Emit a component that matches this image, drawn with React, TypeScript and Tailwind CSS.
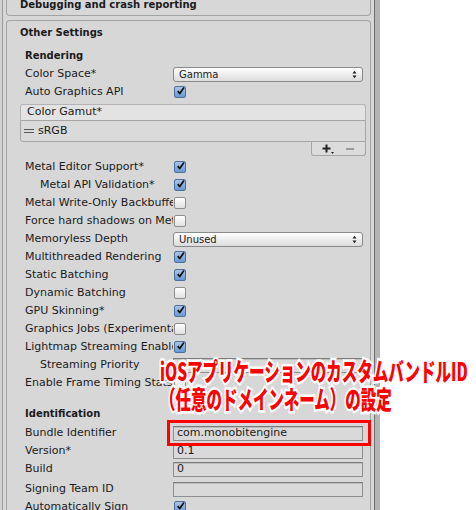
import React from "react";

const ui = { fontFamily: '"DejaVu Sans", "Liberation Sans", sans-serif' };

const Check: React.FC<{ on?: boolean }> = ({ on }) => (
  <div
    className={`ml-px flex h-[12px] w-[12px] items-center justify-center rounded-[2px] border ${
      on
        ? "border-[#4f6f9b] bg-linear-to-b from-[#a8c5ea] to-[#6b98d2]"
        : "border-[#8e8e8e] bg-linear-to-b from-white to-[#e0e0e0]"
    }`}
  >
    {on && (
      <svg width="12" height="12" viewBox="0 0 12 12" className="-mt-[2px] ml-[1px]">
        <path d="M2.3 6.2 L5 9.4 L10.6 1.2" fill="none" stroke="#111" strokeWidth="2.3" strokeLinejoin="round" />
      </svg>
    )}
  </div>
);

const Popup: React.FC<{ value: string }> = ({ value }) => (
  <div className="flex h-[15px] w-[190px] items-center justify-between rounded-[3px] border border-[#8a8a8a] bg-linear-to-b from-white to-[#dcdcdc] pl-[5px] pr-[5px] text-[10px]">
    <span>{value}</span>
    <svg width="5" height="9" viewBox="0 0 5 9">
      <path d="M0.5 3.5 L2.5 0.8 L4.5 3.5 Z M0.5 5.5 L2.5 8.2 L4.5 5.5 Z" fill="#222" />
    </svg>
  </div>
);

const Field: React.FC<{ value?: string }> = ({ value }) => (
  <div className="flex h-[15px] w-[190px] items-center border border-[#8f8f8f] border-t-[#7c7c7c] bg-[#d9d9d9] px-[3px] text-[11px] shadow-[inset_0_1px_0_#bdbdbd]">
    {value}
  </div>
);

const Row: React.FC<{ label: string; indent?: boolean; children?: React.ReactNode }> = ({
  label,
  indent,
  children,
}) => (
  <div className="flex h-[18px] items-center pl-[18px]">
    <div className={`w-[148px] shrink-0 overflow-hidden whitespace-nowrap ${indent ? "pl-[15px]" : ""}`}>
      {label}
    </div>
    <div className="flex w-[190px] items-center">{children}</div>
  </div>
);

const App: React.FC = () => {
  return (
    <div className="relative flex h-[510px] w-[476px] overflow-hidden bg-white text-[11px] text-[#1b1b1b]" style={ui}>
      {/* left edge */}
      <div className="w-[2px] bg-[#d2d2d2]"></div>
      <div className="w-px bg-[#9a9a9a]"></div>

      {/* Inspector panel */}
      <div className="flex w-[371px] flex-col bg-[#d7d7d7] px-[3px]">
        <div className="-mt-[6px] flex h-[22px] shrink-0 items-center rounded-b-[4px] border-x border-b border-[#a2a2a2] pl-[13px] text-[10px] font-bold">
          Debugging and crash reporting
        </div>

        <div className="mt-[4px] shrink-0 grow rounded-t-[4px] border-x border-t border-[#a2a2a2] pt-[2px]">
          <div className="flex h-[18px] items-center pl-[13px] text-[10px] font-bold">Other Settings</div>

          <div className="mt-[5px] flex h-[18px] items-center pl-[18px] text-[10px] font-bold">Rendering</div>

          <div className="mt-[1px]">
            <Row label="Color Space*">
              <Popup value="Gamma" />
            </Row>
            <Row label="Auto Graphics API">
              <Check on />
            </Row>
          </div>

          {/* Color Gamut list */}
          <div className="ml-[13px] mt-[3px] w-[346px]">
            <div className="flex h-[16px] items-center rounded-t-[3px] border border-b-0 border-[#b4b4b4] bg-[#e3e3e3] pl-[6px]">
              Color Gamut*
            </div>
            <div className="flex h-[22px] items-center rounded-bl-[3px] border border-[#a5a5a5] bg-[#dadada] pl-[3px]">
              <svg width="10" height="6" viewBox="0 0 10 6" className="mr-[4px]">
                <path d="M0 1.5 H10 M0 4.5 H10" stroke="#555" strokeWidth="1" />
              </svg>
              sRGB
            </div>
            <div className="ml-auto flex h-[14px] w-[55px] items-center justify-around rounded-b-[3px] border border-t-0 border-[#a5a5a5] bg-[#dcdcdc] px-[4px]">
              <svg width="12" height="10" viewBox="0 0 12 10">
                <path d="M4.5 0.5 V8.5 M0.5 4.5 H8.5" stroke="#222" strokeWidth="2" />
                <path d="M9 8 L12 8 L10.5 10 Z" fill="#222" />
              </svg>
              <svg width="10" height="10" viewBox="0 0 10 10">
                <path d="M1 5 H9" stroke="#8a8a8a" strokeWidth="1.6" />
              </svg>
            </div>
          </div>

          <div className="mt-[2px]">
            <Row label="Metal Editor Support*">
              <Check on />
            </Row>
            <Row label="Metal API Validation*" indent>
              <Check on />
            </Row>
            <Row label="Metal Write-Only Backbuffer">
              <Check />
            </Row>
            <Row label="Force hard shadows on Metal">
              <Check />
            </Row>
            <Row label="Memoryless Depth">
              <Popup value="Unused" />
            </Row>
            <Row label="Multithreaded Rendering">
              <Check on />
            </Row>
            <Row label="Static Batching">
              <Check on />
            </Row>
            <Row label="Dynamic Batching">
              <Check />
            </Row>
            <Row label="GPU Skinning*">
              <Check on />
            </Row>
            <Row label="Graphics Jobs (Experimental)">
              <Check />
            </Row>
            <Row label="Lightmap Streaming Enabled">
              <Check on />
            </Row>
            <Row label="Streaming Priority" indent>
              <Field />
            </Row>
            <Row label="Enable Frame Timing Stats">
              <Check />
            </Row>
          </div>

          <div className="mt-[12px] flex h-[18px] items-center pl-[18px] text-[10px] font-bold">Identification</div>

          <div className="mt-[2px]">
            <Row label="Bundle Identifier">
              <Field value="com.monobitengine" />
            </Row>
            <Row label="Version*">
              <Field value="0.1" />
            </Row>
            <Row label="Build">
              <Field value="0" />
            </Row>
            <div className="mt-[2px]">
              <Row label="Signing Team ID">
                <Field />
              </Row>
              <Row label="Automatically Sign">
                <Check on />
              </Row>
            </div>
          </div>
        </div>
      </div>

      {/* scrollbar edge */}
      <div className="w-px bg-[#6f6f6f]"></div>
      <div className="w-[5px] bg-[#b4b4b4]"></div>

      {/* annotation overlay */}
      <div className="absolute left-[167px] top-[420px] h-[26px] w-[204px] border-[3px] border-[#ff0000]"></div>
      <div
        className="absolute left-[160px] top-[356px] origin-top-left scale-x-[0.62] whitespace-nowrap text-[25px] font-black leading-[28px] text-[#ff0000] [-webkit-text-stroke:5px_white] [paint-order:stroke_fill]"
        style={{ fontFamily: '"Noto Sans CJK JP", "Noto Sans", sans-serif' }}
      >
        <div>iOSアプリケーションのカスタムバンドルID</div>
        <div>（任意のドメインネーム）の設定</div>
      </div>
    </div>
  );
};

export default App;
